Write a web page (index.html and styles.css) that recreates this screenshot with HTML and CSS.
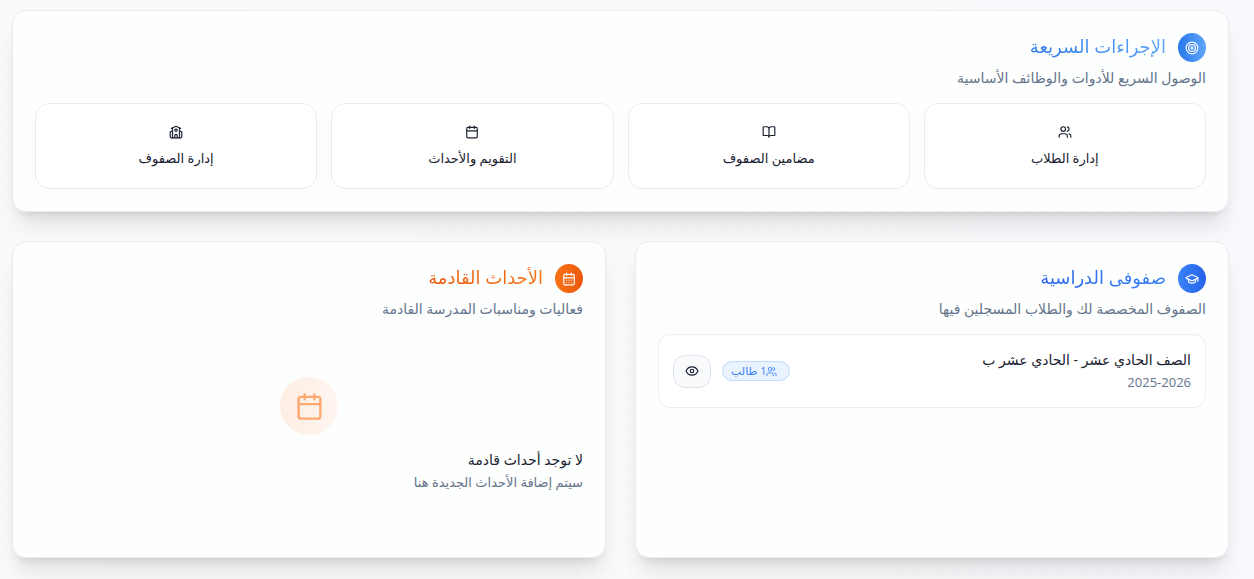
FILE: index.html
```html
<!DOCTYPE html>
<html lang="ar" dir="rtl">
<head>
<meta charset="utf-8">
<meta name="viewport" content="width=device-width, initial-scale=1">
<title>لوحة المعلم</title>
<link rel="stylesheet" href="styles.css">
</head>
<body>
<svg class="sprite" aria-hidden="true">
  <symbol id="users" viewBox="0 0 24 24"><path d="M16 21v-2a4 4 0 0 0-4-4H6a4 4 0 0 0-4 4v2"/><circle cx="9" cy="7" r="4"/><path d="M22 21v-2a4 4 0 0 0-3-3.87M16 3.13a4 4 0 0 1 0 7.75"/></symbol>
  <symbol id="calendar" viewBox="0 0 24 24"><path d="M8 2v4M16 2v4M3 10h18"/><rect x="3" y="4" width="18" height="18" rx="2"/></symbol>
</svg>
<main class="page">
  <section class="card">
    <header class="card-header">
      <div class="card-heading">
        <span class="badge-icon badge-sky"><svg class="icon" viewBox="0 0 24 24"><circle cx="12" cy="12" r="10"/><circle cx="12" cy="12" r="6"/><circle cx="12" cy="12" r="2"/></svg></span>
        <h2 class="card-title title-sky">الإجراءات السريعة</h2>
      </div>
      <p class="card-desc">الوصول السريع للأدوات والوظائف الأساسية</p>
    </header>
    <div class="actions">
      <button type="button" class="action"><svg class="icon"><use href="#users"/></svg><span>إدارة الطلاب</span></button>
      <button type="button" class="action"><svg class="icon" viewBox="0 0 24 24"><path d="M12 7v14M3 18a1 1 0 0 1-1-1V4a1 1 0 0 1 1-1h5a4 4 0 0 1 4 4 4 4 0 0 1 4-4h5a1 1 0 0 1 1 1v13a1 1 0 0 1-1 1h-6a3 3 0 0 0-3 3 3 3 0 0 0-3-3z"/></svg><span>مضامين الصفوف</span></button>
      <button type="button" class="action"><svg class="icon"><use href="#calendar"/></svg><span>التقويم والأحداث</span></button>
      <button type="button" class="action"><svg class="icon" viewBox="0 0 24 24"><path d="M14 22v-4a2 2 0 1 0-4 0v4"/><path d="m18 10 3.447 1.724a1 1 0 0 1 .553.894V20a2 2 0 0 1-2 2H4a2 2 0 0 1-2-2v-7.382a1 1 0 0 1 .553-.894L6 10"/><path d="M18 5v17M6 5v17"/><path d="m4 6 7.106-3.553a2 2 0 0 1 1.788 0L20 6"/><circle cx="12" cy="9" r="2"/></svg><span>إدارة الصفوف</span></button>
    </div>
  </section>

  <div class="columns">
    <section class="card">
      <header class="card-header">
        <div class="card-heading">
          <span class="badge-icon badge-blue"><svg class="icon" viewBox="0 0 24 24"><path d="M21.42 10.922a1 1 0 0 0-.019-1.838L12.83 5.18a2 2 0 0 0-1.66 0L2.6 9.08a1 1 0 0 0 0 1.832l8.57 3.908a2 2 0 0 0 1.66 0z"/><path d="M22 10v6M6 12.5V16a6 3 0 0 0 12 0v-3.5"/></svg></span>
          <h2 class="card-title title-blue">صفوفى الدراسية</h2>
        </div>
        <p class="card-desc">الصفوف المخصصة لك والطلاب المسجلين فيها</p>
      </header>
      <article class="class-row">
        <div>
          <h3 class="item-title">الصف الحادي عشر - الحادي عشر ب</h3>
          <p class="item-meta">2025-2026</p>
        </div>
        <div class="class-tools">
          <span class="count"><svg class="icon"><use href="#users"/></svg>1 طالب</span>
          <button type="button" class="view" aria-label="عرض الصف"><svg class="icon" viewBox="0 0 24 24"><path d="M2.062 12.348a1 1 0 0 1 0-.696 10.75 10.75 0 0 1 19.876 0 1 1 0 0 1 0 .696 10.75 10.75 0 0 1-19.876 0"/><circle cx="12" cy="12" r="3"/></svg></button>
        </div>
      </article>
    </section>

    <section class="card">
      <header class="card-header">
        <div class="card-heading">
          <span class="badge-icon badge-orange"><svg class="icon" viewBox="0 0 24 24"><path d="M8 2v4M16 2v4M3 10h18"/><rect x="3" y="4" width="18" height="18" rx="2"/><path d="M8 14h.01M12 14h.01M16 14h.01M8 18h.01M12 18h.01M16 18h.01"/></svg></span>
          <h2 class="card-title title-orange">الأحداث القادمة</h2>
        </div>
        <p class="card-desc">فعاليات ومناسبات المدرسة القادمة</p>
      </header>
      <div class="empty">
        <div class="empty-icon"><svg class="icon"><use href="#calendar"/></svg></div>
        <h3 class="item-title">لا توجد أحداث قادمة</h3>
        <p class="item-meta">سيتم إضافة الأحداث الجديدة هنا</p>
      </div>
    </section>
  </div>
</main>
</body>
</html>
```
FILE: styles.css
```css
* { box-sizing: border-box; }

body {
  margin: 0;
  min-height: 100vh;
  font-family: "Open Sans", "DejaVu Sans", sans-serif;
  color: #18202f;
  background:
    radial-gradient(circle, rgba(59, 91, 160, 0.035) 1px, transparent 1px) 10px 6px / 18px 18px,
    linear-gradient(90deg, #fafafa, #f8f9fc);
}

h2, h3, p { margin: 0; font-weight: 400; }
button { font: inherit; color: inherit; cursor: pointer; }

.sprite { position: absolute; width: 0; height: 0; }

.icon {
  display: block;
  flex: none;
  width: 14px;
  height: 14px;
  fill: none;
  stroke: currentColor;
  stroke-width: 2;
  stroke-linecap: round;
  stroke-linejoin: round;
}

.page {
  display: flex;
  flex-direction: column;
  gap: 29px;
  padding: 10px 25px 21px 12px;
}

.columns {
  display: grid;
  grid-template-columns: 1fr 1fr;
  gap: 29px;
}

.card {
  padding: 22px;
  border: 1px solid #e9ebee;
  border-radius: 14px;
  background: linear-gradient(90deg, #fefefe, #fdfefe);
  box-shadow: 0 18px 22px -5px rgba(0, 0, 0, 0.1), 0 7px 9px -5px rgba(0, 0, 0, 0.1);
}

.card-header { margin-bottom: 15px; }
.card-heading { display: flex; align-items: flex-start; gap: 12px; margin-bottom: 5px; }

.badge-icon {
  display: grid;
  place-items: center;
  width: 28px;
  height: 29px;
  border-radius: 50%;
  color: #fff;
}

.badge-sky { background: linear-gradient(270deg, #60a5fa, #2878eb); }
.badge-blue { background: linear-gradient(90deg, #3b82f6, #2563eb); }
.badge-orange { background: linear-gradient(90deg, #f97316, #ea580c); }

.card-title {
  font-size: 18px;
  line-height: 27px;
  color: transparent;
  background-clip: text;
}

.title-sky { background-image: linear-gradient(270deg, #60a5fa, #2878eb); }
.title-blue { background-image: linear-gradient(270deg, #3b82f6, #2563eb); }
.title-orange { background-image: linear-gradient(270deg, #f97316, #ea580c); }

.card-desc { font-size: 14px; line-height: 21px; color: #64748b; }

.actions {
  display: grid;
  grid-template-columns: repeat(4, 1fr);
  gap: 14px;
}

.action {
  display: flex;
  flex-direction: column;
  align-items: center;
  gap: 9px;
  padding: 21px 14px 20px;
  border: 1px solid #ebecef;
  border-radius: 14px;
  background: #fff;
  font-size: 13px;
  line-height: 20px;
}

.class-row {
  display: flex;
  align-items: center;
  justify-content: space-between;
  padding: 14px;
  border: 1px solid #ebedf0;
  border-radius: 12px;
  background: #fff;
}

.item-title { font-size: 14px; line-height: 22px; }
.item-meta { font-size: 13px; line-height: 22px; color: #64748b; }

.class-tools { display: flex; align-items: center; gap: 11px; }

.count {
  display: flex;
  align-items: center;
  padding-inline: 12px 8px;
  border: 1px solid #bfdbfe;
  border-radius: 10px;
  background: #eaf2fd;
  color: #3b82f6;
  font-size: 11px;
  line-height: 18px;
}

.count .icon { width: 11px; height: 11px; }

.view {
  display: grid;
  place-items: center;
  width: 38px;
  height: 33px;
  padding: 0;
  border: 1px solid #dfe3ec;
  border-radius: 12px;
  background: #f8fafc;
}

.empty { padding: 43px 0 42px; }

.empty-icon {
  display: grid;
  place-items: center;
  width: 58px;
  height: 58px;
  margin: 0 auto 14px;
  border-radius: 50%;
  background: linear-gradient(90deg, #feeee3, #fff5f0);
  color: #fdaa70;
}

.empty-icon .icon { width: 29px; height: 29px; }
```
